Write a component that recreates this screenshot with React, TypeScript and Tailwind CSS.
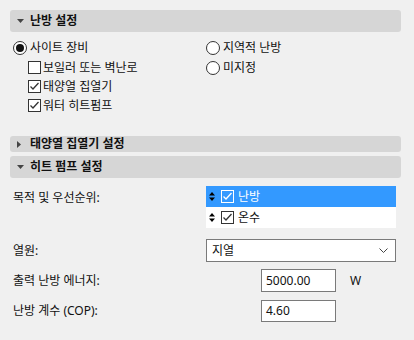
import React from 'react';

const font = { fontFamily: '"Noto Sans", "Noto Sans CJK KR", sans-serif' };

const Tri: React.FC<{ open?: boolean }> = ({ open = true }) =>
  open ? (
    <svg width="7" height="4" viewBox="0 0 7 4" className="shrink-0">
      <path d="M0 0h7L3.5 4z" fill="#444" />
    </svg>
  ) : (
    <svg width="4" height="7" viewBox="0 0 4 7" className="shrink-0">
      <path d="M0 0v7l4-3.5z" fill="#444" />
    </svg>
  );

const Header: React.FC<{ title: string; open?: boolean; h: string; mt: string }> = ({ title, open = true, h, mt }) => (
  <div className={`ml-[10px] w-[391px] ${h} ${mt} flex items-center rounded-[3px] bg-[#d6d6d6]`}>
    <div className="w-[20px] pl-[7px] flex items-center">
      <Tri open={open} />
    </div>
    <span className="text-[12px] font-bold text-[#111] leading-none">{title}</span>
  </div>
);

const Radio: React.FC<{ on?: boolean }> = ({ on }) => (
  <span className="w-[14px] h-[14px] rounded-full border border-[#333] bg-white flex items-center justify-center shrink-0">
    {on && <span className="w-[8px] h-[8px] rounded-full bg-[#111]" />}
  </span>
);

const Check: React.FC<{ on?: boolean; inverse?: boolean }> = ({ on, inverse }) => (
  <span
    className={`w-[13px] h-[13px] border flex items-center justify-center shrink-0 ${
      inverse ? 'border-white bg-[#3399ff]' : 'border-[#333] bg-white'
    }`}
  >
    {on && (
      <svg width="11" height="11" viewBox="0 0 11 11">
        <path d="M1.5 5.5l2.5 2.5 5.5-6" fill="none" stroke={inverse ? '#fff' : '#333'} strokeWidth="1.3" />
      </svg>
    )}
  </span>
);

const Sort = ({ color = '#000' }: { color?: string }) => (
  <svg width="6" height="9" viewBox="0 0 6 9" className="shrink-0">
    <path d="M3 0L6 3.5H0z M3 9L0 5.5h6z" fill={color} />
  </svg>
);

export default function App() {
  return (
    <div className="w-[414px] h-[340px] overflow-hidden bg-[#f0f0f0] text-[12px] text-[#111] pt-[10px]" style={font}>
      <Header title="난방 설정" h="h-[22px]" mt="mt-0" />

      <div className="flex mt-[6px]">
        <div className="w-[206px] pl-[13px] flex flex-col">
          <div className="h-[20px] flex items-center gap-[3px]">
            <Radio on />
            <span>사이트 장비</span>
          </div>
          <div className="pl-[15px] flex flex-col">
            <div className="h-[19px] flex items-center gap-[2px]">
              <Check />
              <span>보일러 또는 벽난로</span>
            </div>
            <div className="h-[19px] flex items-center gap-[2px]">
              <Check on />
              <span>태양열 집열기</span>
            </div>
            <div className="h-[19px] flex items-center gap-[2px]">
              <Check on />
              <span>워터 히트펌프</span>
            </div>
          </div>
        </div>
        <div className="flex flex-col">
          <div className="h-[20px] flex items-center gap-[3px]">
            <Radio />
            <span>지역적 난방</span>
          </div>
          <div className="h-[19px] flex items-center gap-[3px]">
            <Radio />
            <span>미지정</span>
          </div>
        </div>
      </div>

      <Header title="태양열 집열기 설정" open={false} h="h-[16px]" mt="mt-[21px]" />
      <Header title="히트 펌프 설정" h="h-[22px]" mt="mt-[4px]" />

      <div className="flex mt-[8px]">
        <div className="w-[206px] pl-[13px] pt-[3px]">목적 및 우선순위:</div>
        <div className="w-[190px] bg-white">
          <div className="h-[21px] bg-[#3399ff] flex items-center pl-[3px] text-white">
            <Sort />
            <span className="ml-[6px]">
              <Check on inverse />
            </span>
            <span className="ml-[4px]">난방</span>
          </div>
          <div className="h-[21px] flex items-center pl-[3px]">
            <Sort />
            <span className="ml-[6px]">
              <Check on />
            </span>
            <span className="ml-[4px]">온수</span>
          </div>
        </div>
      </div>

      <div className="flex items-center mt-[11px]">
        <div className="w-[206px] pl-[13px]">열원:</div>
        <div className="w-[190px] h-[23px] bg-white border border-[#7a7a7a] flex items-center justify-between pl-[5px] pr-[7px]">
          <span>지열</span>
          <svg width="9" height="5" viewBox="0 0 9 5">
            <path d="M0.5 0.5l4 4 4-4" fill="none" stroke="#444" strokeWidth="1" />
          </svg>
        </div>
      </div>

      <div className="flex items-center mt-[7px]">
        <div className="w-[261px] pl-[13px]">출력 난방 에너지:</div>
        <div className="w-[75px] h-[23px] bg-white border border-[#7a7a7a] flex items-center pl-[4px]">5000.00</div>
        <span className="ml-[14px]">W</span>
      </div>

      <div className="flex items-center mt-[8px]">
        <div className="w-[261px] pl-[13px]">난방 계수 (COP):</div>
        <div className="w-[75px] h-[22px] bg-white border border-[#7a7a7a] flex items-center pl-[4px]">4.60</div>
      </div>
    </div>
  );
}
